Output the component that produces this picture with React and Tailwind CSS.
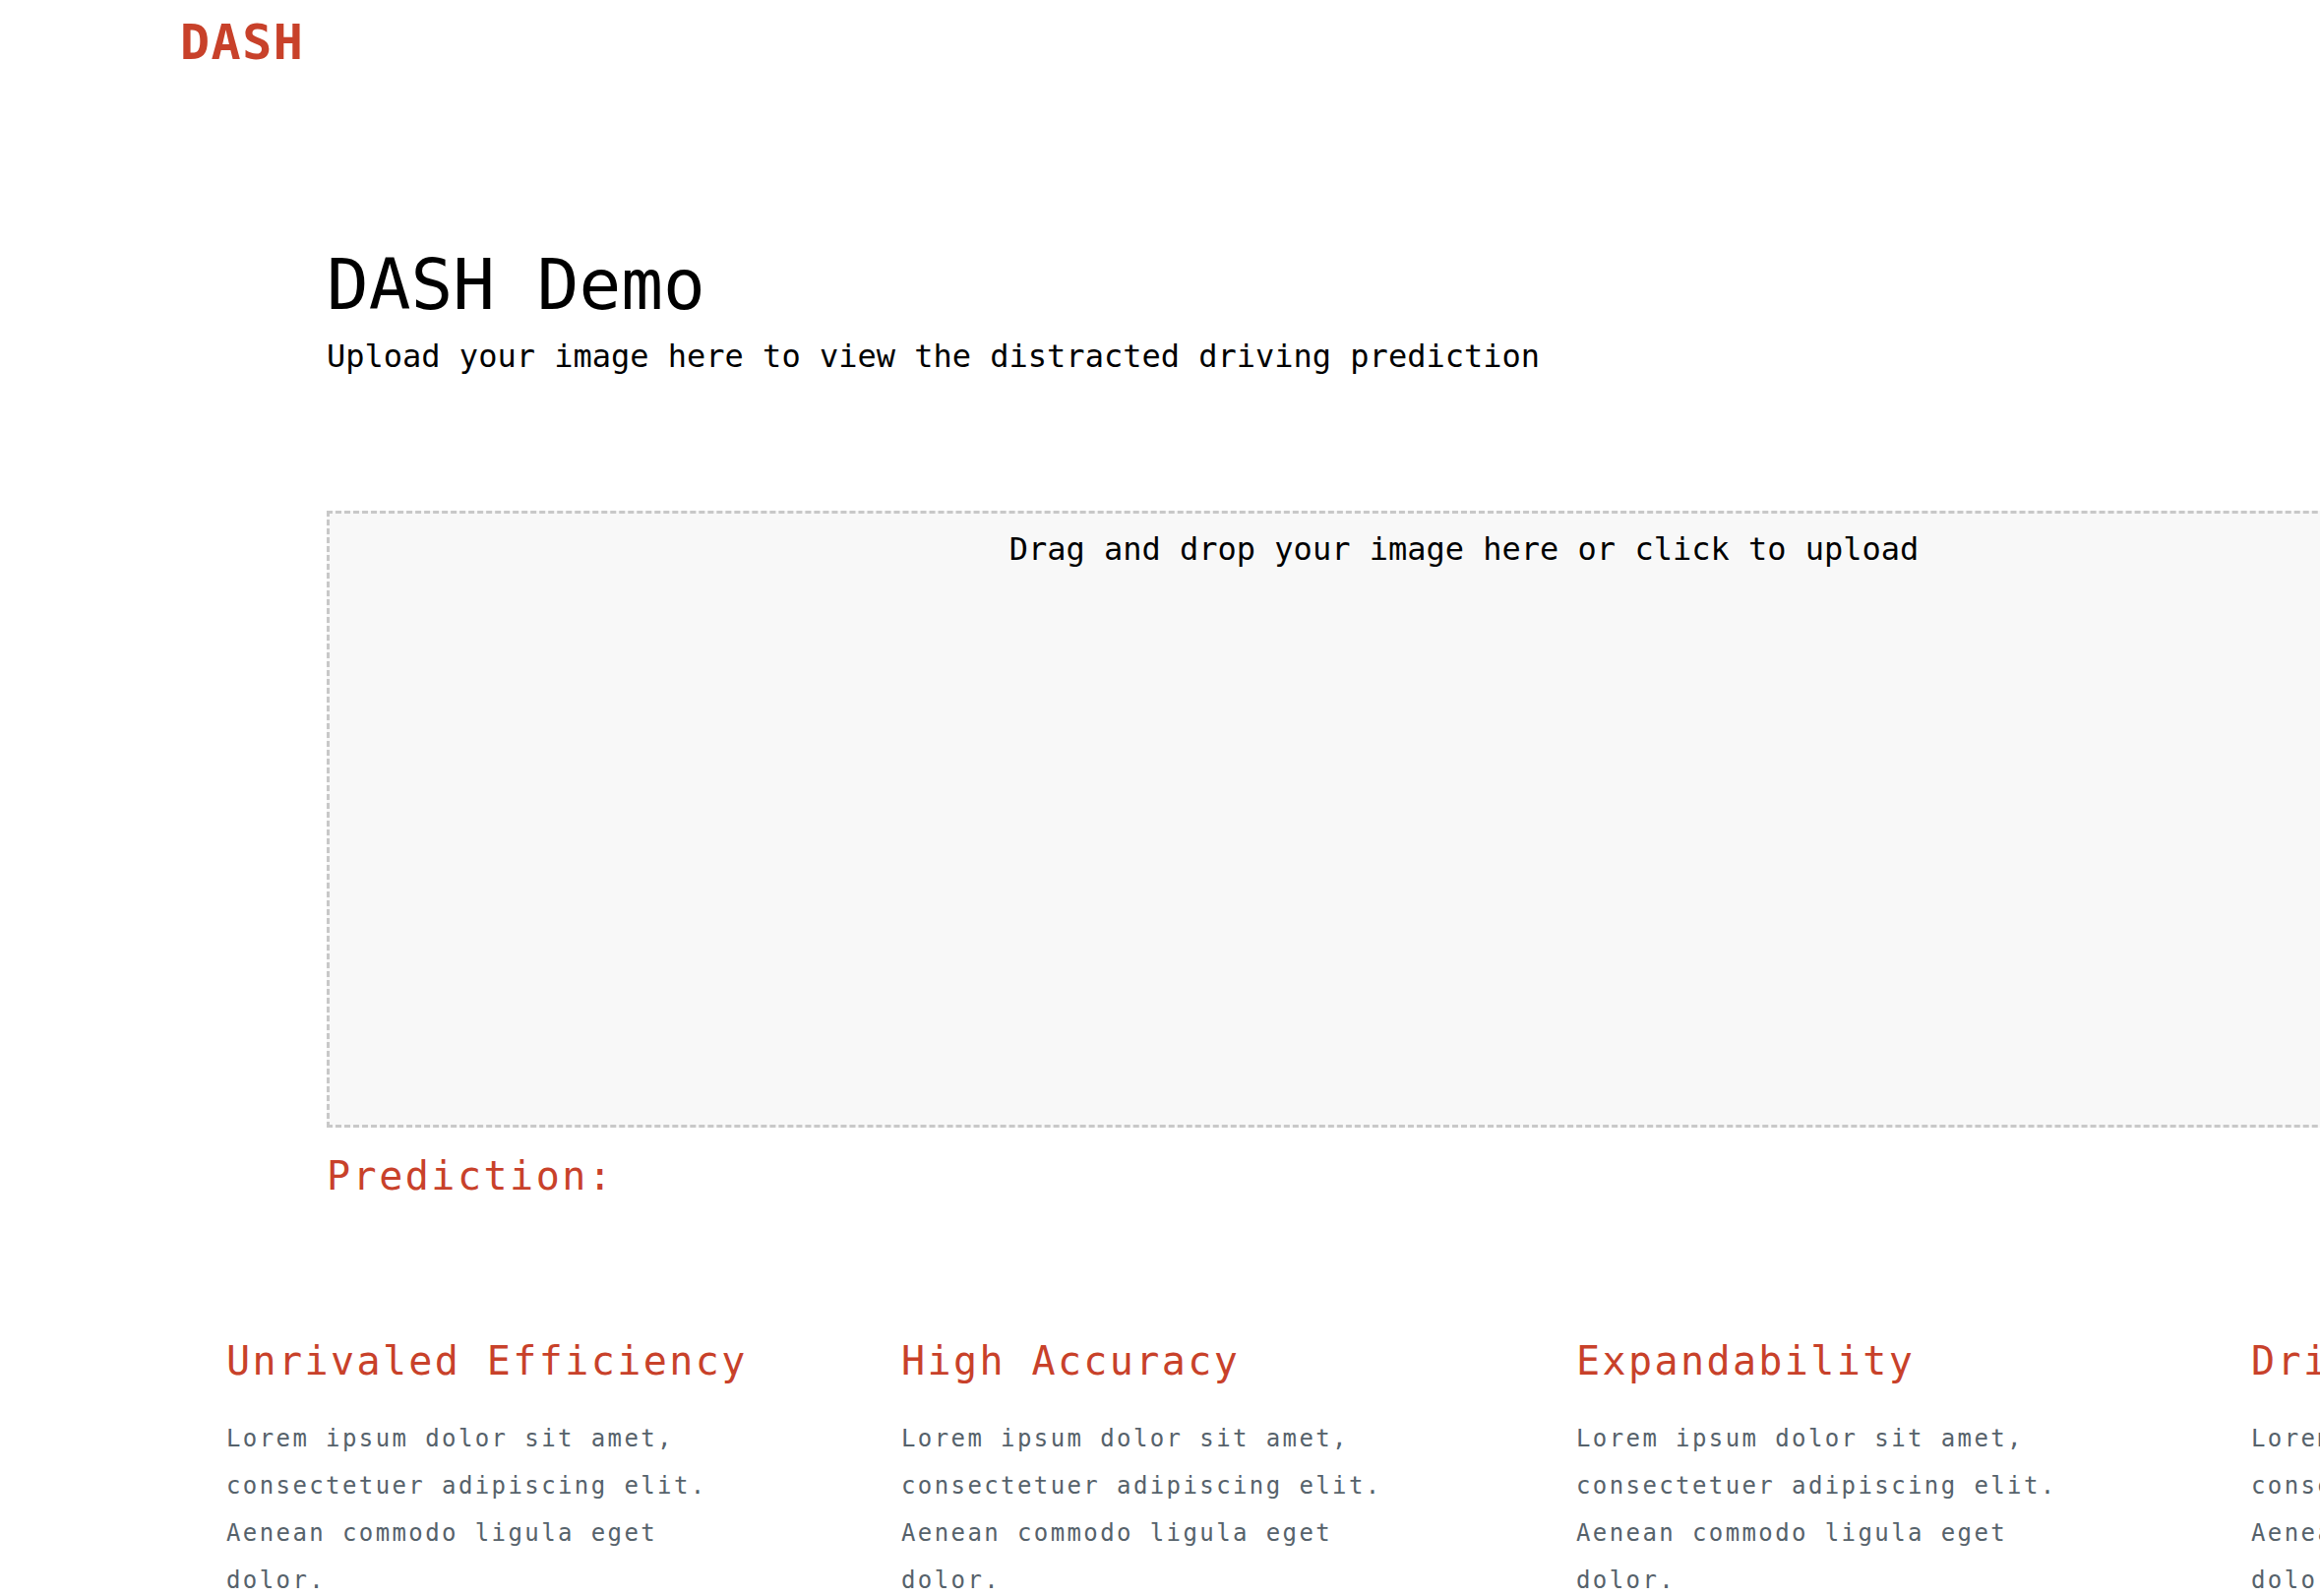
const features = [
  { title: "Unrivaled Efficiency" },
  { title: "High Accuracy" },
  { title: "Expandability" },
  { title: "Driver Safety" },
];

const lorem =
  "Lorem ipsum dolor sit amet, consectetuer adipiscing elit. Aenean commodo ligula eget dolor.";

export default function App() {
  return (
    <div className="h-screen w-full overflow-hidden bg-white font-['DejaVu_Sans_Mono',monospace]">
      <header className="pl-[183px] pt-[15px]">
        <span className="text-[50px] font-bold leading-[56px] tracking-[1.5px] text-[#c8412a]">
          DASH
        </span>
      </header>

      <main className="pl-[332px] pt-[179px]">
        <h1 className="text-[71px] leading-[80px] text-black">DASH Demo</h1>
        <p className="mt-[12px] text-[32px] leading-[40px] text-black">
          Upload your image here to view the distracted driving prediction
        </p>

        <div className="mt-[137px] h-[627px] w-[2312px] shrink-0 border-[3px] border-dashed border-[#c8c8c8] bg-[#f8f8f8] pt-[16px] text-center">
          <span className="text-[32px] leading-[40px] text-black">
            Drag and drop your image here or click to upload
          </span>
        </div>

        <h2 className="mt-[25px] text-[40px] leading-[48px] tracking-[2.5px] text-[#c8412a]">
          Prediction:
        </h2>
      </main>

      <section className="mt-[140px] flex pl-[230px]">
        {features.map((f) => (
          <div key={f.title} className="w-[686px] shrink-0">
            <h3 className="whitespace-nowrap text-[40px] leading-[48px] tracking-[2.4px] text-[#c8412a]">
              {f.title}
            </h3>
            <p className="mt-[31px] w-[525px] text-[24px] leading-[48px] tracking-[2.4px] text-[#56626b]">
              {lorem}
            </p>
          </div>
        ))}
      </section>
    </div>
  );
}
